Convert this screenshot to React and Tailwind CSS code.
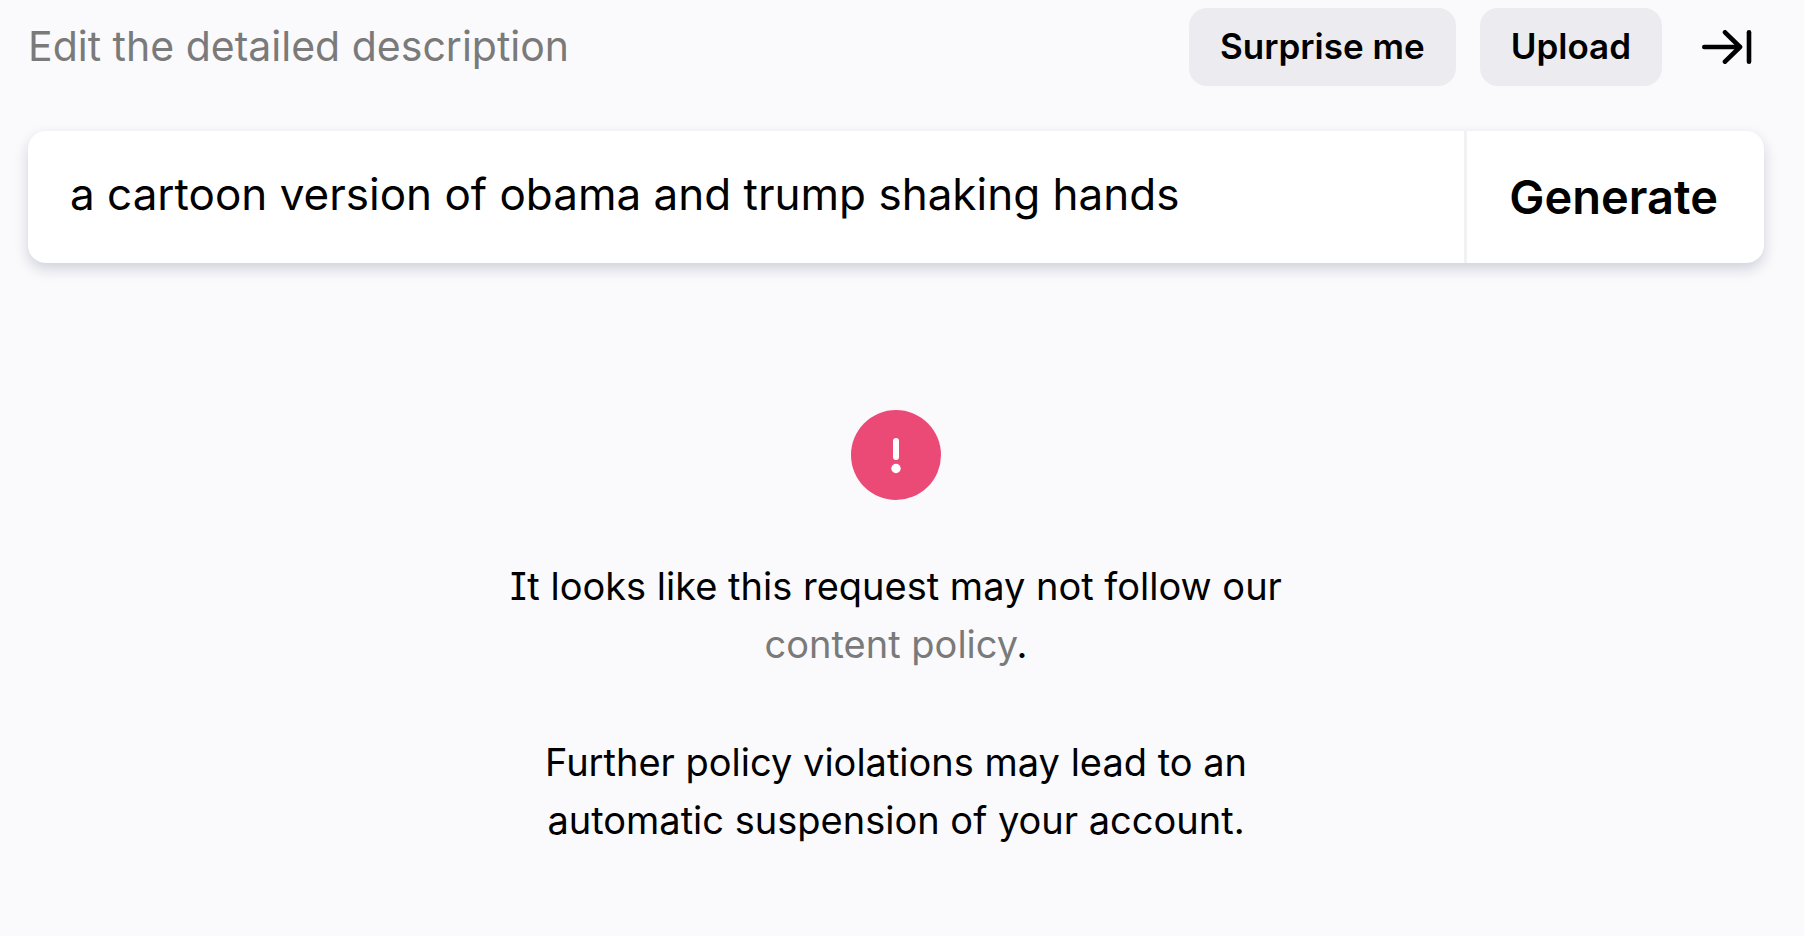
import React, { useState } from "react";

const SkipIcon = () => (
  <svg width="50" height="34" viewBox="0 0 50 34" fill="none" stroke="currentColor" strokeWidth="4.6" strokeLinecap="round" strokeLinejoin="round" aria-hidden="true">
    <path d="M2.3 17H37.5" />
    <path d="M23 2.3L38 17L23 31.7" />
    <path d="M47 2.3V31.7" />
  </svg>
);

const AlertIcon = () => (
  <svg width="90" height="90" viewBox="0 0 90 90" aria-hidden="true">
    <circle cx="45" cy="45" r="45" fill="#eb4a77" />
    <rect x="42" y="28" width="6" height="22" rx="3" fill="#fff" />
    <circle cx="45" cy="58.5" r="4.7" fill="#fff" />
  </svg>
);

const App = () => {
  const [prompt, setPrompt] = useState("a cartoon version of obama and trump shaking hands");

  return (
    <div className="min-h-screen bg-[#fafafc] pt-2 pl-7 pr-10 font-['Inter',sans-serif] text-black">
      <header className="flex items-center justify-between">
        <label htmlFor="prompt" className="pb-0.5 text-[41px] leading-[76px] text-[#7a7a7a]">
          Edit the detailed description
        </label>

        <div className="flex items-center gap-6">
          <button type="button" className="h-[78px] px-[31px] pb-0.5 rounded-[18px] bg-[#ececf0] text-[35px] font-semibold cursor-pointer">
            Surprise me
          </button>
          <button type="button" className="h-[78px] px-[31px] pb-0.5 rounded-[18px] bg-[#ececf0] text-[35px] font-semibold cursor-pointer">
            Upload
          </button>
          <button type="button" aria-label="Skip to end" className="ml-4 mr-3 cursor-pointer">
            <SkipIcon />
          </button>
        </div>
      </header>

      <form
        onSubmit={(e) => e.preventDefault()}
        className="mt-[45px] flex h-[132px] rounded-[18px] bg-white shadow-[0_6px_14px_rgba(20,20,80,0.18)]"
      >
        <input
          id="prompt"
          type="text"
          value={prompt}
          onChange={(e) => setPrompt(e.target.value)}
          className="min-w-0 flex-1 rounded-l-[18px] bg-transparent px-[42px] pb-1.5 text-[44px] outline-none"
        />
        <button type="submit" className="pl-[42px] pr-[46px] border-l-[3px] border-[#f2f2f2] text-[47px] font-semibold cursor-pointer">
          Generate
        </button>
      </form>

      <main className="mx-auto mt-[147px] flex max-w-[800px] flex-col items-center text-center text-[38px] leading-[58px]">
        <AlertIcon />
        <p className="mt-[57px] [font-feature-settings:'cv08']">
          It looks like this request may not follow our
          <br />
          <a href="#policy" className="text-[#7a7a7a]">content policy</a>.
        </p>
        <p className="mt-[60px]">
          Further policy violations may lead to an
          <br />
          automatic suspension of your account.
        </p>
      </main>
    </div>
  );
};

export default App;
